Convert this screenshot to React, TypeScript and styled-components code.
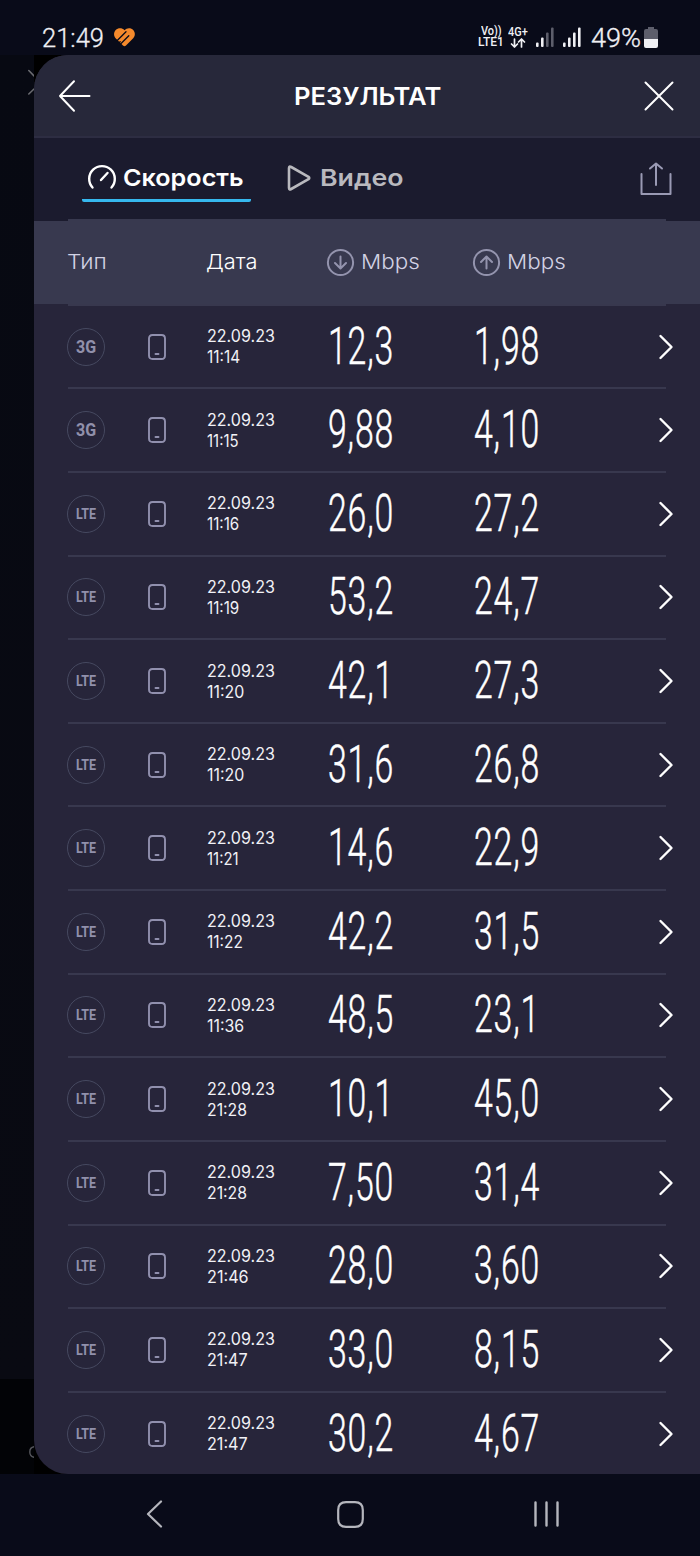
import React, { useLayoutEffect, useRef, useState } from 'react';
import styled, { createGlobalStyle } from 'styled-components';

const Global = createGlobalStyle`
  * { box-sizing: border-box; }
  body { margin: 0; background: #090b19; }
  svg { display: block; flex: none; overflow: visible; }
`;

const Screen = styled.div`
  width: 700px;
  height: 1556px;
  display: flex;
  flex-direction: column;
  background: #090b19;
  overflow: hidden;
  font-family: Inter, 'Noto Sans', sans-serif;
  color: #fff;
`;

/* Text stretched horizontally so that its box has an exact width. */
const FitBox = styled.span<{ $w: number }>`
  display: block;
  width: ${p => p.$w}px;
  flex: none;
  white-space: nowrap;
`;
const FitInner = styled.span`
  display: inline-block;
  transform-origin: 0 50%;
`;

function Fit({ w, children }: { w: number; children: React.ReactNode }) {
  const ref = useRef<HTMLSpanElement>(null);
  const [scale, setScale] = useState(1);
  useLayoutEffect(() => {
    if (ref.current) setScale(w / ref.current.offsetWidth);
  }, [w]);
  return (
    <FitBox $w={w}>
      <FitInner ref={ref} style={{ transform: `scaleX(${scale})` }}>{children}</FitInner>
    </FitBox>
  );
}

const StatusBar = styled.div`
  height: 55px;
  flex: none;
  display: flex;
  justify-content: space-between;
  align-items: center;
  padding: 19px 42px 0 42px;
  color: #f0f0f4;
  font-family: Roboto, sans-serif;
`;
const StatusGroup = styled.div`
  display: flex;
  align-items: center;
`;
const StatusText = styled.div`
  font-size: 25.5px;
  line-height: 36px;
  padding-top: 1px;
  font-weight: 300;
  -webkit-text-stroke: 0.3px #f0f0f4;
`;
const Tiny = styled.div`
  display: flex;
  flex-direction: column;
  align-items: center;
  font-size: 12px;
  line-height: 11px;
  font-weight: 500;
`;
const Spacer = styled.div<{ $w: number }>`
  width: ${p => p.$w}px;
  flex: none;
`;

const Body = styled.div`
  height: 1419px;
  flex: none;
  display: flex;
  background: #000;
`;
const Behind = styled.div`
  width: 34px;
  display: flex;
  flex-direction: column;
  justify-content: space-between;
  align-items: flex-end;
  padding: 14px 0 16px;
  overflow: hidden;
  background: linear-gradient(#070912 0, #090a12 1324px, #020306 1324px);
`;
const Panel = styled.div`
  flex: 1;
  display: flex;
  flex-direction: column;
  background: #27253a;
  border-radius: 34px 0 0 34px;
  overflow: hidden;
`;
const Header = styled.header`
  height: 83px;
  flex: none;
  display: flex;
  align-items: center;
  justify-content: space-between;
  padding: 0 26px 0 25px;
  background: #27283a;
  border-bottom: 2px solid #2d2d42;
`;
const Title = styled.h1`
  margin: 2px 0 0;
  font-size: 24px;
  line-height: 30px;
  font-weight: 600;
`;
const Tabs = styled.nav`
  height: 83px;
  flex: none;
  display: flex;
  align-items: flex-start;
  padding: 24px 28px 0 48px;
  background: linear-gradient(#38394f, #38394f) 34px 100% / 598px 2px no-repeat #1b1b2e;
`;
const Tab = styled.div<{ $active?: boolean }>`
  display: flex;
  align-items: center;
  height: 40px;
  padding: 0 7px 5px 6px;
  border-bottom: 3px solid ${p => (p.$active ? '#36b8ee' : 'transparent')};
  border-radius: 2px;
  color: ${p => (p.$active ? '#fff' : '#b9b9be')};
  font-size: 23.5px;
  line-height: 30px;
  font-weight: 600;
`;
const ShareButton = styled.div`
  margin-left: auto;
`;

const columns = '80px 59px 121px 146px 1fr auto';
const ColumnHead = styled.div`
  height: 82.8px;
  flex: none;
  display: grid;
  grid-template-columns: ${columns};
  align-items: center;
  padding: 0 27px 0 33px;
  background: #38394f;
  color: #d2d2e4;
  font-size: 20.5px;
  line-height: 28px;
  font-weight: 300;
`;
const HeadCell = styled.div<{ $bright?: boolean; $span?: number }>`
  display: flex;
  align-items: center;
  gap: 7px;
  margin-left: -0.5px;
  grid-column: span ${p => p.$span ?? 1};
  color: ${p => (p.$bright ? '#fff' : 'inherit')};
`;
const Row = styled.div`
  height: 83.62px;
  flex: none;
  display: grid;
  grid-template-columns: ${columns};
  align-items: center;
  margin: 0 27px 0 34px;
  padding-top: 2px;
  background: linear-gradient(#38384e, #38384e) 0 0 / 598px 2px no-repeat;
`;
const Badge = styled.div<{ $large: boolean }>`
  width: 38px;
  height: 38px;
  margin-left: -1px;
  border: 1.6px solid #464960;
  border-radius: 50%;
  display: flex;
  align-items: center;
  justify-content: center;
  color: #9190ab;
  font-family: Roboto, sans-serif;
  font-weight: 700;
  font-size: ${p => (p.$large ? 18 : 14)}px;
  line-height: 20px;
`;
const When = styled.div`
  padding-top: 1px;
  margin-left: -0.5px;
  font-size: 16.8px;
  line-height: 21px;
  color: #f1f1f6;
`;
const Speed = styled.div`
  width: max-content;
  font-family: Roboto, sans-serif;
  font-weight: 300;
  font-size: 52.5px;
  line-height: 60px;
  padding-bottom: 2px;
  letter-spacing: 1.3px;
  transform: scaleX(0.645);
  transform-origin: 0 50%;
  -webkit-text-stroke: 0.5px #fff;
`;
const NavBar = styled.div`
  flex: 1;
  display: flex;
  align-items: center;
  justify-content: space-between;
  padding: 0 141px 2px 146px;
`;
const HomeKey = styled.div`
  margin-left: 3px;
`;

const Line = ({ w, h, d, c = '#fff', s = 2 }: { w: number; h: number; d: string; c?: string; s?: number }) => (
  <svg width={w} height={h} viewBox={`0 0 ${w} ${h}`} fill="none" stroke={c} strokeWidth={s} strokeLinecap="round" strokeLinejoin="round">
    <path d={d} />
  </svg>
);

const Signal = ({ level }: { level: number }) => (
  <svg width="18" height="20" viewBox="0 0 18 20">
    {[0, 1, 2, 3].map(i => (
      <rect key={i} x={i * 5} y={15.5 - i * 5} width="2.6" height={4.5 + i * 5} rx="1" fill={i < level ? '#f0f0f4' : '#5d5e6b'} />
    ))}
  </svg>
);

const RoundArrow = ({ up }: { up?: boolean }) => (
  <Line w={27} h={27} c="#9494ae" s={2}
    d={'M13.5 .9a12.600 12.600 0 1 0 0 25.200a12.600 12.600 0 1 0 0-25.200 ' + (up ? 'M13.5 19.500V8M8 13L13.500 7.500l5.500 5.500' : 'M13.500 7.500v11.500M8 14L13.500 19.500l5.500-5.500')} />
);

const results: [string, string, string, string][] = [
  ['3G', '11:14', '12,3', '1,98'],
  ['3G', '11:15', '9,88', '4,10'],
  ['LTE', '11:16', '26,0', '27,2'],
  ['LTE', '11:19', '53,2', '24,7'],
  ['LTE', '11:20', '42,1', '27,3'],
  ['LTE', '11:20', '31,6', '26,8'],
  ['LTE', '11:21', '14,6', '22,9'],
  ['LTE', '11:22', '42,2', '31,5'],
  ['LTE', '11:36', '48,5', '23,1'],
  ['LTE', '21:28', '10,1', '45,0'],
  ['LTE', '21:28', '7,50', '31,4'],
  ['LTE', '21:46', '28,0', '3,60'],
  ['LTE', '21:47', '33,0', '8,15'],
  ['LTE', '21:47', '30,2', '4,67'],
];

const timeWidth: Record<string, number> = {
  '11:14': 33, '11:15': 32, '11:16': 32.5, '11:19': 32.5, '11:20': 37,
  '11:21': 32, '11:22': 36, '11:36': 37, '21:28': 40.5, '21:46': 41.5, '21:47': 40.5,
};

export default function App() {
  return (
    <Screen>
      <Global />
      <StatusBar>
        <StatusGroup>
          <StatusText><Fit w={62}>21:49</Fit></StatusText>
          <Spacer $w={10} />
          <svg width="21" height="19" viewBox="0 0 21 19" fill="none" strokeLinecap="round">
            <path fill="#f58a2c" d="M10.500 2.200C12.600-.2 16.300-.6 18.700 1.600C21.600 4.300 21.400 8 19.200 10.200L12 17.600Q10.500 19 9 17.600L1.600 10.200C-.4 8-.5 4.300 1.700 2C4-.3 8-.5 10.500 2.200Z" />
            <path stroke="#090b19" strokeWidth="1.300" d="M3 12.800L12 3.800M6.800 15.800L14.800 7.800M5.600 14.200L6.200 13.600" />
          </svg>
        </StatusGroup>
        <StatusGroup>
          <Tiny><Fit w={21}>Vo))</Fit><Fit w={26}>LTE1</Fit></Tiny>
          <Spacer $w={4} />
          <Tiny>
            <Fit w={20}>4G+</Fit>
            <Line w={14} h={10} s={1.7} c="#f0f0f4" d="M3.500 1v8M.5 6l3 3 3-3M10.500 9V1M7.500 4l3-3 3 3" />
          </Tiny>
          <Spacer $w={8} />
          <Signal level={2} />
          <Spacer $w={9} />
          <Signal level={4} />
          <Spacer $w={10} />
          <StatusText><Fit w={50}>49%</Fit></StatusText>
          <Spacer $w={3} />
          <svg width="14" height="21" viewBox="0 0 14 21">
            <path d="M4 0h6v2h2q2 0 2 2v8H0V4q0-2 2-2h2z" fill="#5d5e6b" />
            <path d="M0 12h14v7q0 2-2 2H2q-2 0-2-2z" fill="#f0f0f4" />
          </svg>
        </StatusGroup>
      </StatusBar>

      <Body>
        <Behind>
          <Line w={6} h={26} c="#6a6b70" s={1.6} d="M.8 1.500L6 7M6 20L.8 25" />
          <Line w={5} h={12} c="#55565c" s={1.4} d="M5 .8Q.8 1.500.8 6T5 11.200" />
        </Behind>
        <Panel>
          <Header>
            <Line w={32} h={32} d="M1 16h29.500M15 1.200L1 16l14 14.800" s={2} />
            <Title><Fit w={147}>РЕЗУЛЬТАТ</Fit></Title>
            <Line w={30} h={30} d="M1.500 1.500l27 27M28.500 1.500l-27 27" s={2} />
          </Header>
          <Tabs>
            <Tab $active>
              <Line w={28} h={28} s={2.4} d="M4.500 23.500A12.800 12.800 0 1 1 23.500 23.500M13 16l6.500-7" />
              <Spacer $w={7} />
              <Fit w={121}>Скорость</Fit>
            </Tab>
            <Spacer $w={30} />
            <Tab>
              <Line w={24} h={26} c="#b9b9be" s={2.6} d="M2 3.200Q2 .8 4.200 2L21.500 11.800Q23 13 21.500 14.200L4.200 24Q2 25.200 2 22.800Z" />
              <Spacer $w={9} />
              <Fit w={83}>Видео</Fit>
            </Tab>
            <ShareButton>
              <Line w={32} h={33} c="#9a9ab4" s={2} d="M1.500 12v20h29V12M16 23V2M10 6.500L16 1.500l6 5" />
            </ShareButton>
          </Tabs>
          <ColumnHead>
            <HeadCell $span={2}><Fit w={40}>Тип</Fit></HeadCell>
            <HeadCell $bright><Fit w={51}>Дата</Fit></HeadCell>
            <HeadCell><RoundArrow /><Fit w={59}>Mbps</Fit></HeadCell>
            <HeadCell><RoundArrow up /><Fit w={59}>Mbps</Fit></HeadCell>
          </ColumnHead>
          {results.map(([type, time, down, up], i) => (
            <Row key={i}>
              <Badge $large={type === '3G'}><Fit w={20.5}>{type}</Fit></Badge>
              <Line w={18} h={26} c="#9190ae" s={1.9} d="M4.500 1h9Q17 1 17 4.500v17Q17 25 13.500 25h-9Q1 25 1 21.500v-17Q1 1 4.500 1zM7.500 20h3" />
              <When>
                <Fit w={68}>22.09.23</Fit>
                <Fit w={timeWidth[time]}>{time}</Fit>
              </When>
              <Speed>{down}</Speed>
              <Speed>{up}</Speed>
              <Line w={14} h={24} s={2.400} d="M1.500 1l11 11-11 11" />
            </Row>
          ))}
        </Panel>
      </Body>

      <NavBar>
        <Line w={17} h={28} c="#b5b6bd" s={2.200} d="M15 1.500L2 14l13 12.500" />
        <HomeKey>
          <Line w={27} h={27} c="#b5b6bd" s={2.200} d="M9 1.200h9Q25.800 1.200 25.800 9v9Q25.800 25.800 18 25.800H9Q1.200 25.800 1.200 18V9Q1.200 1.200 9 1.200z" />
        </HomeKey>
        <Line w={25} h={26} c="#b5b6bd" s={2.400} d="M1.500 1.500v23M12.500 1.500v23M23.500 1.500v23" />
      </NavBar>
    </Screen>
  );
}
